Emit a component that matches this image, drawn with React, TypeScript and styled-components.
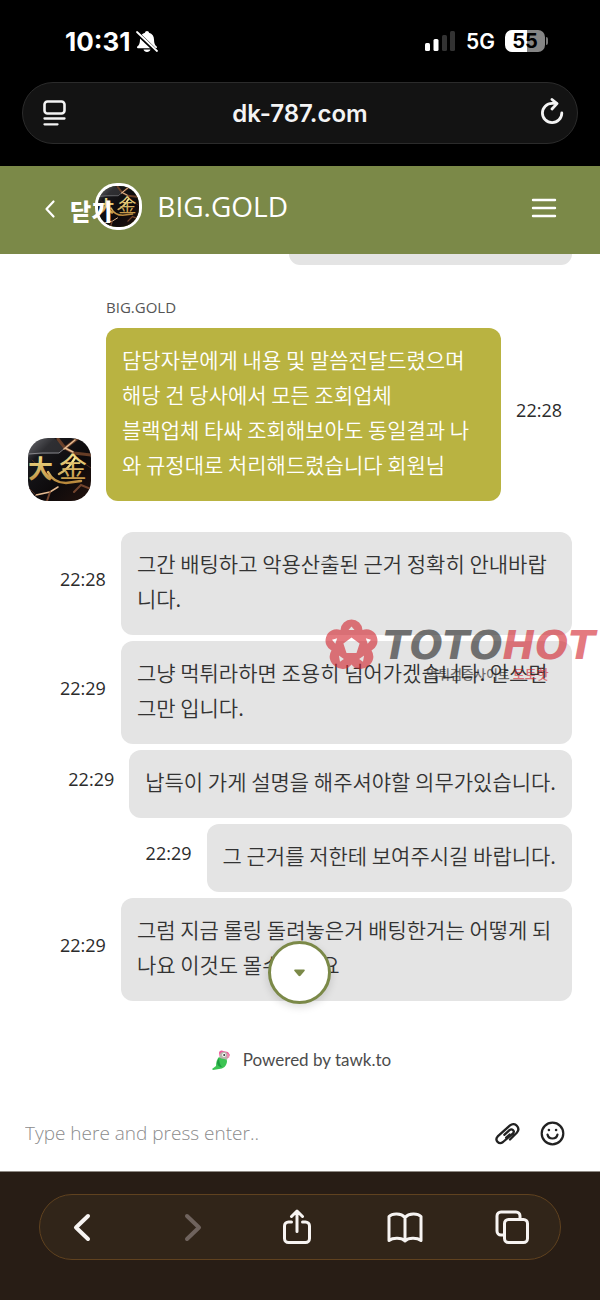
import React from "react";
import styled, { createGlobalStyle } from "styled-components";

const chatFont = `"Open Sans", "Noto Sans CJK KR", sans-serif`;
const systemFont = `Inter, "Noto Sans CJK KR", sans-serif`;
const olive = "#7b8948";

const GlobalStyle = createGlobalStyle`
  * { box-sizing: border-box; }
  body { margin: 0; background: #281d15; font-family: ${chatFont}; }
  button { margin: 0; padding: 0; border: 0; background: none; color: inherit; font: inherit; cursor: pointer; }
  svg { display: block; flex: none; }
`;

const Page = styled.div`
  display: flex;
  flex-direction: column;
  min-height: 100vh;
  background: #fff;
`;

const BrowserTop = styled.div`
  background: #000;
  color: #fff;
  padding: 0 22px 22px;
  font-family: ${systemFont};
`;

const StatusBar = styled.div`
  display: flex;
  align-items: center;
  height: 82px;
  padding: 0 30px 0 43px;
`;

const Clock = styled.time`
  font-size: 26px;
  font-weight: 700;
  margin-right: 6px;
`;

const StatusRight = styled.div`
  display: flex;
  align-items: center;
  margin-left: auto;
`;

const Network = styled.span`
  font-size: 21px;
  font-weight: 600;
  margin: 0 10px;
`;

const Battery = styled.div`
  width: 40px;
  height: 22px;
  border-radius: 7px;
  background: linear-gradient(90deg, #fff 55%, #858585 55%);
  color: #000;
  font-size: 20px;
  font-weight: 700;
  line-height: 22px;
  text-align: center;
`;

const BatteryTip = styled.div`
  width: 2px;
  height: 8px;
  margin-left: 1px;
  border-radius: 0 2px 2px 0;
  background: #777;
`;

const AddressBar = styled.div`
  display: grid;
  grid-template-columns: 1fr auto 1fr;
  align-items: center;
  height: 62px;
  padding: 0 12px;
  border: 1px solid #2b2b2b;
  border-radius: 31px;
  background: #131313;
  font-size: 24px;
  font-weight: 600;
  color: #f4f4f4;
`;

const AddressButton = styled.button<{ $end?: boolean }>`
  justify-self: ${(p) => (p.$end ? "end" : "start")};
  padding-left: ${(p) => (p.$end ? "0" : "7px")};
`;

const ChatHeader = styled.header`
  display: flex;
  align-items: center;
  height: 88px;
  padding: 0 43px;
  background: ${olive};
  color: #fff;
`;

const BackButton = styled.button`
  display: flex;
  align-items: center;
  gap: 14px;
  position: relative;
  z-index: 1;
  margin-bottom: 2px;
`;

const BackLabel = styled.span`
  padding-top: 2px;
  font-family: "Noto Sans CJK KR", sans-serif;
  font-size: 23px;
  font-weight: 900;
  line-height: 34px;
`;

const HeaderAvatar = styled.div`
  margin: -8px 0 0 -17px;
  border: 3px solid #fff;
  border-radius: 22px;
  overflow: hidden;
`;

const HeaderTitle = styled.h1`
  flex: 1;
  margin: 0 0 8px 15px;
  font-size: 28px;
  font-weight: 400;
  line-height: 40px;
`;

const MenuButton = styled.button`
  margin-bottom: 4px;
`;

const Thread = styled.main`
  position: relative;
  padding: 0 28px;
`;

const EarlierBubble = styled.div`
  width: 52%;
  height: 11px;
  margin-left: auto;
  border-radius: 0 0 12px 12px;
  background: #e4e4e4;
`;

const Sender = styled.div`
  margin: 30px 0 9px 78px;
  color: #555;
  font-size: 15px;
  line-height: 24px;
`;

const AgentRow = styled.div`
  display: flex;
  gap: 15px;
  padding-right: 10px;
  margin-bottom: 31px;
`;

const AgentAvatar = styled.div`
  align-self: flex-end;
  border-radius: 20px;
  overflow: hidden;
`;

const VisitorRow = styled.div`
  display: flex;
  align-items: center;
  justify-content: flex-end;
  gap: 15px;
  padding-left: 32px;
  margin-bottom: 6px;
`;

const Bubble = styled.p<{ $agent?: boolean }>`
  flex: ${(p) => (p.$agent ? "1" : "0 1 auto")};
  margin: 0;
  padding: 14px 16px 19px;
  border-radius: 12px;
  background: ${(p) => (p.$agent ? "#b9b341" : "#e4e4e4")};
  color: ${(p) => (p.$agent ? "#fff" : "#333")};
  font-family: "Noto Sans CJK KR", sans-serif;
  font-size: 21px;
  font-weight: 350;
  line-height: 35px;
  white-space: pre-line;
  word-break: break-all;
`;

const Stamp = styled.time`
  flex: none;
  align-self: center;
  color: #2b2b2b;
  font-size: 18px;
  line-height: 24px;
  margin-top: -10px;
`;

const ScrollButton = styled.button`
  position: absolute;
  left: 50%;
  bottom: 3px;
  display: grid;
  place-items: center;
  width: 63px;
  height: 63px;
  margin-left: -32px;
  border: 3px solid ${olive};
  border-radius: 50%;
  background: #fff;
  box-shadow: 0 3px 8px rgba(0, 0, 0, 0.14);
`;

const Watermark = styled.div`
  position: absolute;
  top: 365px;
  right: 5px;
  display: flex;
  gap: 5px;
  opacity: 0.6;
  color: #222;
  pointer-events: none;
`;

const WatermarkName = styled.div`
  font-family: "DejaVu Sans", sans-serif;
  font-size: 39px;
  font-style: italic;
  font-weight: 700;
  line-height: 54px;
  height: 46px;
`;

const WatermarkTagline = styled.div`
  padding-left: 43px;
  font-family: "Noto Sans CJK KR", sans-serif;
  font-size: 13px;
  font-weight: 500;
  line-height: 18px;
`;

const Red = styled.span`
  color: #d3222c;
`;

const Powered = styled.a`
  display: flex;
  align-items: center;
  justify-content: center;
  gap: 12px;
  margin-top: 40px;
  padding-left: 3px;
  color: #4c4c4c;
  font-family: Lato, sans-serif;
  font-size: 17px;
  line-height: 26px;
  text-decoration: none;
`;

const Composer = styled.form`
  display: flex;
  align-items: center;
  gap: 20px;
  height: 76px;
  margin-top: 22px;
  padding: 0 35px 0 25px;
  color: #222;
`;

const MessageInput = styled.input`
  flex: 1;
  min-width: 0;
  padding: 0;
  border: 0;
  outline: 0;
  font-family: ${chatFont};
  font-size: 19px;
  font-weight: 350;
  color: #333;
  &::placeholder { color: #8c8c8c; opacity: 1; }
`;

const BrowserBottom = styled.div`
  flex: 1;
  padding: 22px 39px 40px;
  border-top: 1px solid #8f8a84;
  background: #281d15;
`;

const Toolbar = styled.nav`
  display: flex;
  align-items: center;
  justify-content: space-between;
  height: 66px;
  padding: 0 30px 0 24px;
  border: 1px solid #60421f;
  border-radius: 33px;
  background: #312519;
  color: #f7f4f2;
`;

const ToolButton = styled.button`
  color: ${(p) => (p.disabled ? "#6f635d" : "inherit")};
`;

const AvatarArt = ({ size, id }: { size: number; id: string }) => (
  <svg width={size} height={size} viewBox="0 0 63 63" aria-hidden="true">
    <defs>
      <linearGradient id={id} x1="0" y1="0" x2="0" y2="1">
        <stop offset="0" stopColor="#fff19a" />
        <stop offset="1" stopColor="#b9873a" />
      </linearGradient>
      <linearGradient id={`${id}-stone`} x1="0" y1="0" x2="1" y2="1">
        <stop offset="0" stopColor="#66676c" />
        <stop offset="0.22" stopColor="#17171b" />
        <stop offset="0.6" stopColor="#0d0a0b" />
        <stop offset="1" stopColor="#23120d" />
      </linearGradient>
    </defs>
    <rect width="63" height="63" fill={`url(#${id}-stone)`} />
    <path d="M0 17 31 15 37 9 26 0H0z" fill="#77777b" opacity="0.25" />
    <g fill="none" strokeLinecap="round">
      <path d="M37 10 50 0M37 10l-7-9M37 10l9 5 17 2" stroke="#7d4a2d" strokeWidth="3" opacity="0.8" />
      <path d="M0 16 14 15 31 15 37 10" stroke="#85858a" strokeWidth="1" />
      <path d="M37 10 45 14M36 11 47 2M8 57l14-3 8-5" stroke="#e6bc92" strokeWidth="1.500" />
      <path d="M22 54l-3 9M46 54l7-7 10 4" stroke="#8a5236" strokeWidth="2" opacity="0.8" />
      <path d="M0 49l8 8M50 21l13 9M4 22l12 11" stroke="#4d2b20" strokeWidth="1" />
      <path d="M20 34c4 8 10 11 18 11l15-2M31 36c6-3 12-9 16-16" stroke={`url(#${id})`} strokeWidth="2.500" />
    </g>
    <g fill={`url(#${id})`} fontFamily="Noto Sans CJK KR, sans-serif">
      <text x="0" y="40" fontSize="25" fontWeight="700">大</text>
      <text x="31" y="40" fontSize="28" fontWeight="400">金</text>
    </g>
  </svg>
);

const BellOff = () => (
  <svg width="22" height="23" viewBox="0 0 22 23" aria-label="Silent" role="img">
    <path d="M11 1c-1 0-2 .8-2 1.8C5.600 3.600 4 6.300 4 9.500c0 4-1 5.500-2.700 7.100-.6.600-.3 1.600.6 1.600h18.200c.9 0 1.200-1 .6-1.600C19 15 18 13.500 18 9.500c0-3.200-1.600-5.900-5-6.700C13 1.800 12 1 11 1zM7.500 19.500c.4 1.600 1.800 2.500 3.500 2.500s3.100-.9 3.500-2.500z" fill="#fff" />
    <path d="M1 3l20 19" stroke="#000" strokeWidth="4" />
    <path d="M1 2l20 19" stroke="#fff" strokeWidth="1.800" strokeLinecap="round" />
  </svg>
);

const Signal = () => (
  <svg width="31" height="20" viewBox="0 0 31 20" aria-label="Signal" role="img">
    <rect x="0" y="12" width="5" height="8" rx="1.500" fill="#fff" />
    <rect x="8.500" y="8" width="5" height="12" rx="1.500" fill="#fff" />
    <rect x="17" y="4" width="5" height="16" rx="1.500" fill="#333" />
    <rect x="25" y="0" width="5" height="20" rx="1.500" fill="#333" />
  </svg>
);

const PageMenuIcon = () => (
  <svg width="25" height="28" viewBox="0 0 25 28" fill="none" stroke="#f4f4f4" strokeLinecap="round">
    <rect x="2.500" y="2.500" width="20" height="12" rx="3" strokeWidth="2.600" />
    <path d="M2.500 19.500h20M2.500 25.300h13" strokeWidth="2.300" />
  </svg>
);

const ReloadIcon = () => (
  <svg width="26" height="30" viewBox="0 0 26 30" fill="none" stroke="#f4f4f4" strokeWidth="2.800" strokeLinecap="round" strokeLinejoin="round">
    <path d="M22.800 15a9.700 9.700 0 1 1-9.700-9.700h4" />
    <path d="m13 1.500 5 4.100-5 5.400" />
  </svg>
);

const FlowerMark = () => (
  <svg width="53" height="54" viewBox="-26.500 -27 53 54" aria-hidden="true">
    <path
      fill="#d3222c"
      fillRule="evenodd"
      d={`M0-26.500a11 11 0 0 1 11 10.500a11 11 0 0 1 14.500 7.500a11 11 0 0 1-5.500 13a11 11 0 0 1-3.500 15.500a11 11 0 0 1-16.500-1.500a11 11 0 0 1-16.500 1.500a11 11 0 0 1-3.500-15.500a11 11 0 0 1-5.500-13a11 11 0 0 1 14.500-7.500a11 11 0 0 1 11-10.500z
      M0-8.500 8.100-2.600 5 6.900H-5L-8.100-2.600z
      M-3-16 0-19.500 3-16z
      M14.300-7.800 19.500-6.300 16.200-2.200z
      M12.600 9.600 11.500 15.800 7.600 13z
      M-12.600 9.600-11.500 15.800-7.600 13z
      M-14.300-7.800-19.500-6.300-16.200-2.200z`}
    />
  </svg>
);

const Parrot = () => (
  <svg width="19" height="21" viewBox="0 0 19 21" aria-hidden="true">
    <path d="M7 3c0-2 2-3 4-2l5 1 2 3-3 4H8z" fill="#ec5f9c" />
    <path d="M8 4c2-3 7-3 8 1l-1 5-7-1z" fill="#b9b4ad" />
    <circle cx="12" cy="5" r="1.900" fill="#fff" />
    <circle cx="12.200" cy="5.100" r="1" fill="#333" />
    <path d="M15 4c2-.5 3 1 2 4-2-.5-3-2-2-4z" fill="#f08bb1" />
    <path d="M7 7c3 3 8 1 8 4 0 5-4 8-8 8L1 20l-1-1 4-3c0-4 1-7 3-9z" fill="#3cc453" />
    <path d="M7 8c0 4 1 7 3 9-3 0-5-2-5-5z" fill="#1e9c41" />
  </svg>
);

const ClipIcon = () => (
  <svg width="25" height="23" viewBox="0 0 25 23" fill="none" stroke="#222" strokeWidth="2.300" strokeLinecap="round" strokeLinejoin="round">
    <path d="m15 17.500 6.800-6.800c4.300-4.800-2-11.300-6.800-7.300L2.700 14.400c-3.400 3.900 1.300 8.800 5.300 5.600L18 11.300c2.200-2.500-1-5.200-3.500-3.200l-5.200 4.700" />
    <path d="m11.200 15.700 3.500-3.200" />
  </svg>
);

const SmileIcon = () => (
  <svg width="25" height="25" viewBox="0 0 25 25" fill="none" stroke="#222" strokeLinecap="round">
    <circle cx="12.500" cy="12.500" r="10.800" strokeWidth="2.200" />
    <path d="M7.500 13.500c1 5.300 9 5.300 10 0" strokeWidth="2.200" />
    <circle cx="8.900" cy="9" r="1.300" fill="#222" stroke="none" />
    <circle cx="16.100" cy="9" r="1.300" fill="#222" stroke="none" />
  </svg>
);

const ToolIcon = ({ children }: { children: React.ReactNode }) => (
  <svg width="36" height="36" viewBox="0 0 36 36" fill="none" stroke="currentColor" strokeWidth="3" strokeLinecap="round" strokeLinejoin="round">
    {children}
  </svg>
);

const visitorMessages = [
  { time: "22:28", text: "그간 배팅하고 악용산출된 근거 정확히 안내바랍니다." },
  { time: "22:29", text: "그냥 먹튀라하면 조용히 넘어가겠습니다. 안쓰면 그만 입니다." },
  { time: "22:29", text: "납득이 가게 설명을 해주셔야할 의무가있습니다." },
  { time: "22:29", text: "그 근거를 저한테 보여주시길 바랍니다." },
  { time: "22:29", text: "그럼 지금 롤링 돌려놓은거 배팅한거는 어떻게 되나요 이것도 몰수인가요" },
];

export default function App() {
  return (
    <Page>
      <GlobalStyle />
      <BrowserTop>
        <StatusBar>
          <Clock>10:31</Clock>
          <BellOff />
          <StatusRight>
            <Signal />
            <Network>5G</Network>
            <Battery>55</Battery>
            <BatteryTip />
          </StatusRight>
        </StatusBar>
        <AddressBar>
          <AddressButton type="button" aria-label="Page menu"><PageMenuIcon /></AddressButton>
          <span>dk-787.com</span>
          <AddressButton $end type="button" aria-label="Reload"><ReloadIcon /></AddressButton>
        </AddressBar>
      </BrowserTop>

      <ChatHeader>
        <BackButton type="button">
          <svg width="13" height="20" viewBox="0 0 13 20" fill="none" stroke="#fff" strokeWidth="2.200" strokeLinecap="round" strokeLinejoin="round">
            <path d="M10.500 2.500 3.500 10l7 7.500" />
          </svg>
          <BackLabel>닫기</BackLabel>
        </BackButton>
        <HeaderAvatar><AvatarArt size={41} id="gold-small" /></HeaderAvatar>
        <HeaderTitle>BIG.GOLD</HeaderTitle>
        <MenuButton type="button" aria-label="Menu">
          <svg width="26" height="22" viewBox="0 0 26 22" stroke="#fff" strokeWidth="2.400" strokeLinecap="round">
            <path d="M2 3h22M2 11h22M2 19h22" />
          </svg>
        </MenuButton>
      </ChatHeader>

      <Thread>
        <EarlierBubble />
        <Sender>BIG.GOLD</Sender>
        <AgentRow>
          <AgentAvatar><AvatarArt size={63} id="gold-large" /></AgentAvatar>
          <Bubble $agent>
            {"담당자분에게 내용 및 말씀전달드렸으며\n해당 건 당사에서 모든 조회업체\n블랙업체 타싸 조회해보아도 동일결과 나와 규정대로 처리해드렸습니다 회원님"}
          </Bubble>
          <Stamp>22:28</Stamp>
        </AgentRow>
        {visitorMessages.map((m) => (
          <VisitorRow key={m.text}>
            <Stamp>{m.time}</Stamp>
            <Bubble>{m.text}</Bubble>
          </VisitorRow>
        ))}
        <ScrollButton type="button" aria-label="Scroll to latest">
          <svg width="11" height="8" viewBox="0 0 11 8">
            <path d="M1 .5h9c1 0 1 1 .5 1.500L6.500 6.800c-.5.600-1.500.600-2 0L.5 2C0 1.500 0 .5 1 .5z" fill={olive} />
          </svg>
        </ScrollButton>
        <Watermark>
          <FlowerMark />
          <div>
            <WatermarkName>TOTO<Red>HOT</Red></WatermarkName>
            <WatermarkTagline>먹튀검증사이트 <Red>토토핫</Red></WatermarkTagline>
          </div>
        </Watermark>
      </Thread>

      <Powered href="#tawk"><Parrot />Powered by tawk.to</Powered>

      <Composer onSubmit={(e) => e.preventDefault()}>
        <MessageInput aria-label="Message" placeholder="Type here and press enter.." />
        <button type="button" aria-label="Attach file"><ClipIcon /></button>
        <button type="button" aria-label="Emoji"><SmileIcon /></button>
      </Composer>

      <BrowserBottom>
        <Toolbar>
          <ToolButton type="button" aria-label="Back">
            <ToolIcon><path d="M24 7 12 18.500 24 30" strokeWidth="4" /></ToolIcon>
          </ToolButton>
          <ToolButton type="button" aria-label="Forward" disabled>
            <ToolIcon><path d="m15 7 12 11.500L15 30" strokeWidth="4" /></ToolIcon>
          </ToolButton>
          <ToolButton type="button" aria-label="Share">
            <ToolIcon>
              <path d="M12.500 13H9.500a4 4 0 0 0-4 4v12.500a4 4 0 0 0 4 4h17a4 4 0 0 0 4-4V17a4 4 0 0 0-4-4h-3M18 22.500V3M12.500 7.500 18 2l5.500 5.500" />
            </ToolIcon>
          </ToolButton>
          <ToolButton type="button" aria-label="Bookmarks">
            <ToolIcon>
              <path d="M18 8.500C14 4 5.500 4 2 7.500v24c4-3 12.500-3 16 .5 3.500-3.500 12-3.500 16-.5v-24C30.500 4 22 4 18 8.500zM18 8.500V32" />
            </ToolIcon>
          </ToolButton>
          <ToolButton type="button" aria-label="Tabs">
            <ToolIcon>
              <rect x="10.500" y="10.500" width="23" height="23" rx="4" />
              <path d="M10 26H7a4 4 0 0 1-4-4V7a4 4 0 0 1 4-4h15a4 4 0 0 1 4 4v3" />
            </ToolIcon>
          </ToolButton>
        </Toolbar>
      </BrowserBottom>
    </Page>
  );
}
